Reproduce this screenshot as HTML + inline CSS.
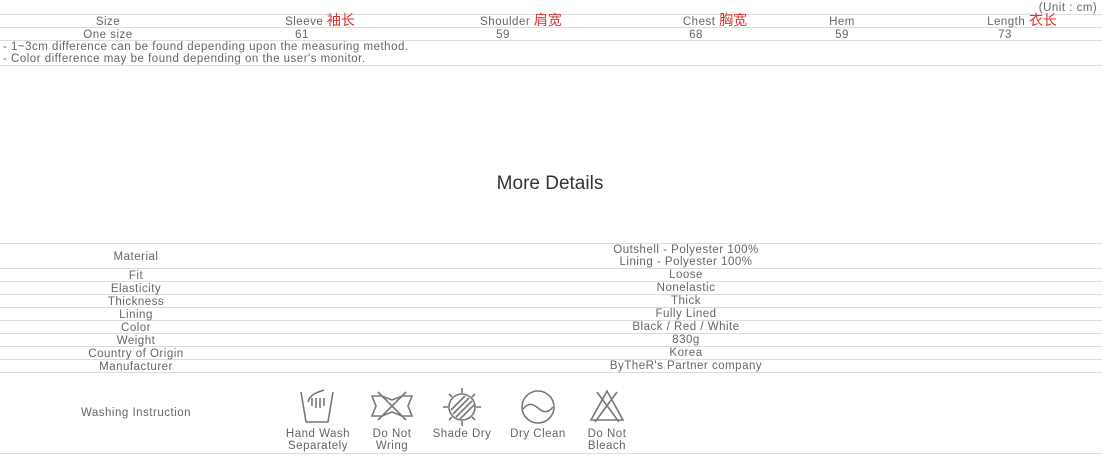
<!DOCTYPE html><html><head><meta charset="utf-8"><style>
body{margin:0;width:1110px;height:459px;background:#fff;font-family:"Liberation Sans","Noto Sans CJK SC",sans-serif;color:#666;font-size:11.5px;letter-spacing:0.5px;position:relative;overflow:hidden}
.l{position:absolute;left:0;width:1102px;height:1px;background:#dcdcdc}
.t{position:absolute;white-space:nowrap;transform:translateX(-50%);line-height:12px;text-align:center}
.r{color:#e03030;font-size:14px;letter-spacing:0}
.n{position:absolute;left:3px;line-height:12px}
svg{position:absolute}
</style></head><body>
<div class="t" style="left:1068px;top:2px">(Unit : cm)</div>
<div class="l" style="top:14px"></div><div class="l" style="top:27px"></div><div class="l" style="top:40px"></div><div class="l" style="top:65px"></div>
<div class="t" style="left:108px;top:16px">Size</div>
<div class="t" style="left:320px;top:14px">Sleeve <span class="r">袖长</span></div>
<div class="t" style="left:521px;top:14px">Shoulder <span class="r">肩宽</span></div>
<div class="t" style="left:715px;top:14px">Chest <span class="r">胸宽</span></div>
<div class="t" style="left:842px;top:16px">Hem</div>
<div class="t" style="left:1022px;top:14px">Length <span class="r">衣长</span></div>
<div class="t" style="left:108px;top:29px">One size</div>
<div class="t" style="left:302px;top:29px">61</div>
<div class="t" style="left:503px;top:29px">59</div>
<div class="t" style="left:696px;top:29px">68</div>
<div class="t" style="left:842px;top:29px">59</div>
<div class="t" style="left:1005px;top:29px">73</div>
<div class="n" style="top:41px">- 1~3cm difference can be found depending upon the measuring method.</div>
<div class="n" style="top:53px">- Color difference may be found depending on the user's monitor.</div>
<div class="t" style="left:550px;top:173px;font-size:19px;color:#333;line-height:22px;letter-spacing:0">More Details</div>
<div class="l" style="top:243px"></div><div class="l" style="top:268px"></div><div class="l" style="top:281px"></div><div class="l" style="top:294px"></div><div class="l" style="top:307px"></div><div class="l" style="top:320px"></div><div class="l" style="top:333px"></div><div class="l" style="top:346px"></div><div class="l" style="top:359px"></div><div class="l" style="top:372px"></div><div class="l" style="top:453px"></div>
<div class="t" style="left:136px;top:251px">Material</div>
<div class="t" style="left:686px;top:244px">Outshell - Polyester 100%</div>
<div class="t" style="left:686px;top:256px">Lining - Polyester 100%</div>
<div class="t" style="left:136px;top:270px">Fit</div><div class="t" style="left:686px;top:269px">Loose</div>
<div class="t" style="left:136px;top:283px">Elasticity</div><div class="t" style="left:686px;top:282px">Nonelastic</div>
<div class="t" style="left:136px;top:296px">Thickness</div><div class="t" style="left:686px;top:295px">Thick</div>
<div class="t" style="left:136px;top:309px">Lining</div><div class="t" style="left:686px;top:308px">Fully Lined</div>
<div class="t" style="left:136px;top:322px">Color</div><div class="t" style="left:686px;top:321px">Black / Red / White</div>
<div class="t" style="left:136px;top:335px">Weight</div><div class="t" style="left:686px;top:334px">830g</div>
<div class="t" style="left:136px;top:348px">Country of Origin</div><div class="t" style="left:686px;top:347px">Korea</div>
<div class="t" style="left:136px;top:361px">Manufacturer</div><div class="t" style="left:686px;top:360px">ByTheR's Partner company</div>
<div class="t" style="left:136px;top:407px">Washing Instruction</div>
<svg style="left:298px;top:386px" width="40" height="40" viewBox="0 0 40 40" fill="none" stroke="#777" stroke-width="1.6"><path d="M3 6 L8 36 H30 L35 6"/><path d="M10 16 C12 8 20 6 26 4 M14 20 V12 M18 22 V12 M22 22 V12 M26 20 V12"/></svg>
<svg style="left:370px;top:390px" width="44" height="32" viewBox="0 0 44 32" fill="none" stroke="#777" stroke-width="1.6"><path d="M2 6 H12 L22 10 L32 6 H42 L38 16 L42 26 H32 L22 22 L12 26 H2 L6 16 Z"/><path d="M8 2 L36 30 M36 2 L8 30"/></svg>
<svg style="left:441px;top:386px" width="42" height="42" viewBox="0 0 42 42" fill="none" stroke="#777" stroke-width="1.6"><circle cx="21" cy="21" r="13"/><path d="M21 2V7M21 35V40M2 21H7M35 21H40M8 8L11 11M31 31L34 34M8 34L11 31M31 11L34 8"/><path d="M12 28L28 12M10 24L24 10M15 31L31 15M19 33L33 19"/></svg>
<svg style="left:519px;top:388px" width="38" height="38" viewBox="0 0 38 38" fill="none" stroke="#777" stroke-width="1.6"><circle cx="19" cy="19" r="16"/><path d="M4 21 C9 15 13 15 19 20 C25 25 29 25 34 19"/></svg>
<svg style="left:589px;top:388px" width="36" height="36" viewBox="0 0 36 36" fill="none" stroke="#777" stroke-width="1.6"><path d="M18 3 L34 32 H2 Z"/><path d="M8 4 L30 34 M28 4 L6 34"/></svg>
<div class="t" style="left:318px;top:428px">Hand Wash<br>Separately</div>
<div class="t" style="left:392px;top:428px">Do Not<br>Wring</div>
<div class="t" style="left:462px;top:428px">Shade Dry</div>
<div class="t" style="left:538px;top:428px">Dry Clean</div>
<div class="t" style="left:607px;top:428px">Do Not<br>Bleach</div>
</body></html>
